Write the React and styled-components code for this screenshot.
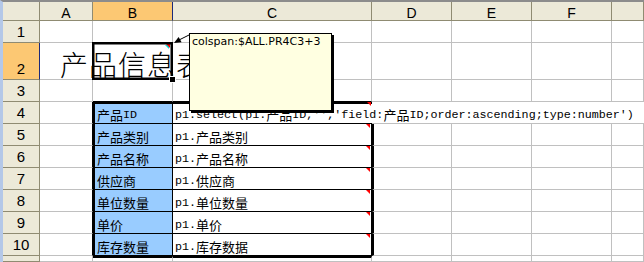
import styled, { createGlobalStyle } from "styled-components";

const GlobalStyle = createGlobalStyle`
  html, body {
    margin: 0;
    padding: 0;
    background: #fff;
    overflow: hidden;
  }
`;

const GRID = "1px solid #c0c0c0";
const INK_THIN = "1px solid #000";
const INK_THICK = "2px solid #000";
const HEAD_LINE = "#8f8b72";

// the last column and row are only partly in the window, so they carry no label
const COLUMNS = [
  { name: "A", width: 53 },
  { name: "B", width: 80 },
  { name: "C", width: 199 },
  { name: "D", width: 80 },
  { name: "E", width: 80 },
  { name: "F", width: 80 },
  { name: "G", width: 32, cut: true },
];
const ROWS = [
  { height: 22 },
  { height: 37 },
  ...Array.from({ length: 8 }, () => ({ height: 22 })),
  { height: 6, cut: true },
];

const FIELDS = [
  ["产品ID", "p1.select(p1.产品ID,'','field:产品ID;order:ascending;type:number')"],
  ["产品类别", "p1.产品类别"],
  ["产品名称", "p1.产品名称"],
  ["供应商", "p1.供应商"],
  ["单位数量", "p1.单位数量"],
  ["单价", "p1.单价"],
  ["库存数量", "p1.库存数据"],
];

const Sheet = styled.div`
  position: relative;
  display: grid;
  grid-template-columns: 37px ${COLUMNS.map((c) => c.width + "px").join(" ")};
  grid-template-rows: 19px ${ROWS.map((r) => r.height + "px").join(" ")};
  width: max-content;
  border-top: 2px solid #8c8c8c;
  border-left: 3px solid #b4c8e8;
  background: #fff;
`;

const HeadCell = styled.div`
  box-sizing: border-box;
  display: flex;
  justify-content: center;
  align-items: flex-end;
  background: ${(p) => (p.$active ? "#fcc873" : "#ece9d8")};
  border-right: 1px solid ${(p) => (p.$active ? "#1c2a7a" : HEAD_LINE)};
  border-bottom: 1px solid ${HEAD_LINE};
  font-family: "Liberation Sans", Arial, sans-serif;
  color: #000;
`;

const ColHead = styled(HeadCell)`
  font-size: 14px;
  line-height: 14px;
`;

const RowHead = styled(HeadCell)`
  font-size: 15px;
  line-height: 17px;
  padding-bottom: 2px;
`;

const Cell = styled.div`
  box-sizing: border-box;
  position: ${(p) => (p.$anchor ? "relative" : "static")};
  display: flex;
  align-items: flex-end;
  min-width: 0;
  padding-left: ${(p) => p.$pad ?? 2}px;
  white-space: nowrap;
  background: ${(p) => p.$fill || "transparent"};
  border-top: ${(p) => p.$top || "none"};
  border-left: ${(p) => p.$left || "none"};
  border-right: ${(p) => p.$right || GRID};
  border-bottom: ${(p) => p.$bottom || GRID};
  font: 11.7px/16px "Liberation Mono", "Noto Sans CJK SC", monospace;
  color: #000;
`;

const Han = styled.span`
  font-family: "Noto Sans CJK SC", sans-serif;
  font-size: 13px;
`;

const Title = styled.span`
  padding-left: 20px;
  font: 300 28px/30px "Noto Sans CJK SC", sans-serif;
  letter-spacing: 1px;
`;

const Selection = styled.div`
  position: absolute;
  inset: -1px;
  border: 2px solid #000;
  box-shadow: inset 0 0 0 0.5px #000;
  pointer-events: none;
`;

const FillHandle = styled.div`
  position: absolute;
  right: -4px;
  bottom: -4px;
  width: 5px;
  height: 5px;
  background: #000;
  border: 1px solid #fff;
`;

const CommentMark = styled.div`
  position: absolute;
  top: ${(p) => p.$top ?? 0}px;
  right: ${(p) => p.$right ?? 0}px;
  width: 0;
  height: 0;
  border-top: 4px solid #ff0000;
  border-left: 4px solid transparent;
  filter: ${(p) => (p.$glow ? "drop-shadow(-1px 1px 0 #00e0e0)" : "none")};
`;

const Note = styled.div`
  position: absolute;
  left: 186px;
  top: 31px;
  z-index: 3;
  box-sizing: border-box;
  width: 143px;
  height: 78px;
  padding: 1px 2px;
  background: #ffffe1;
  border: 1px solid #000;
  box-shadow: 2px 2px 0 #000;
  font: 11px/13px "DejaVu Sans", Verdana, sans-serif;
  color: #000;
`;

const Leader = styled.svg`
  position: absolute;
  left: 167px;
  top: 28px;
  z-index: 3;
  overflow: visible;
`;

const withHan = (text) =>
  text
    .split(/([\u4e00-\u9fff]+)/)
    .filter(Boolean)
    .map((part, i) =>
      /[\u4e00-\u9fff]/.test(part) ? <Han key={i}>{part}</Han> : part
    );

function cellProps(row, col) {
  const table = row >= 4 && row <= 10;
  const props = {};
  if (table && col === "A") props.$right = INK_THIN;
  if (table && col === "B") {
    props.$left = INK_THICK;
    props.$right = INK_THIN;
    props.$fill = "#99ccff";
  }
  if (col === "B" || col === "C") {
    if (row === 3 || table) props.$bottom = INK_THIN;
    if (row === 4 || row === 11) props.$top = INK_THICK;
  }
  if (col === "C" && row >= 5 && row <= 10) props.$right = INK_THIN;
  if (col === "D" && row >= 5 && row <= 10) props.$left = INK_THICK;
  if (row === 4 && "CDEFG".includes(col)) props.$right = "none";
  return props;
}

function App() {
  const cells = [];
  ROWS.forEach(({ cut }, i) => {
    const row = i + 1;
    cells.push(
      <RowHead key={`h${row}`} $active={row === 2}>
        {cut ? null : row}
      </RowHead>
    );
    COLUMNS.forEach(({ name }) => {
      const key = `${name}${row}`;
      const props = cellProps(row, name);
      const field = row >= 4 && row <= 10 ? FIELDS[row - 4] : null;

      if (key === "A2") {
        cells.push(
          <Cell key={key} $pad={0}>
            <Title>产品信息表</Title>
          </Cell>
        );
      } else if (key === "B2") {
        cells.push(
          <Cell key={key} $anchor>
            <CommentMark $top={1} $right={2} $glow />
            <Selection />
            <FillHandle />
          </Cell>
        );
      } else if (field && name === "B") {
        cells.push(
          <Cell key={key} {...props}>
            {withHan(field[0])}
          </Cell>
        );
      } else if (field && name === "C") {
        cells.push(
          <Cell key={key} {...props} $anchor>
            {withHan(field[1])}
            <CommentMark $top={row === 4 ? -2 : 0} $right={1} />
          </Cell>
        );
      } else {
        cells.push(<Cell key={key} {...props} />);
      }
    });
  });

  return (
    <>
      <GlobalStyle />
      <Sheet>
        <HeadCell />
        {COLUMNS.map(({ name, cut }) => (
          <ColHead key={name} $active={name === "B"}>
            {cut ? null : name}
          </ColHead>
        ))}
        {cells}
        <Leader width="22" height="16" viewBox="0 0 22 16">
          <line x1="21" y1="4" x2="9" y2="10" stroke="#000" strokeWidth="1" />
          <polygon points="4,13 11.6,12.2 8.6,7" fill="#000" />
        </Leader>
        <Note>colspan:$ALL.PR4C3+3</Note>
      </Sheet>
    </>
  );
}

export default App;
